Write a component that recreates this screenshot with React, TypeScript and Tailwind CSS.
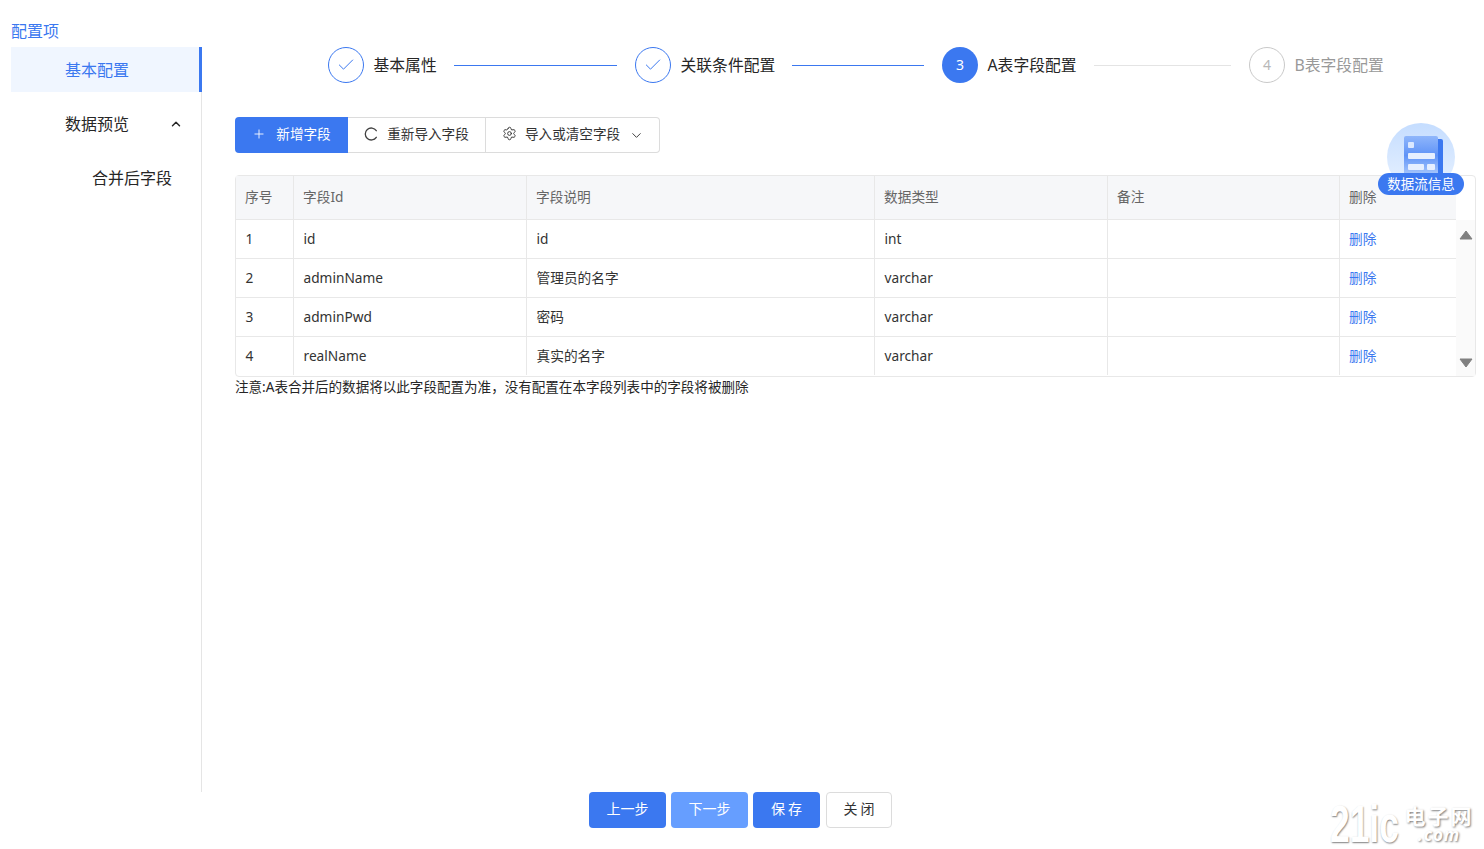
import React from "react";
import { Plus, Settings, ChevronDown, ChevronUp, Check } from "lucide-react";

const font = "[font-family:'Noto_Sans','Noto_Sans_CJK_SC',sans-serif]";

const cols = "grid grid-cols-[58px_233px_348px_233px_232px_116px]";

function Step({ n, label, state, line }: { n: string; label: string; state: "done" | "active" | "todo"; line?: "blue" | "gray" }) {
  return (
    <div className={line ? "flex w-[307px] items-center" : "flex items-center"}>
      {state === "done" && (
        <div className="flex h-9 w-9 items-center justify-center rounded-full border border-[#3b78f0]">
          <Check size={20} strokeWidth={1.2} className="text-[#3b78f0]" />
        </div>
      )}
      {state === "active" && (
        <div className="flex h-9 w-9 items-center justify-center rounded-full bg-[#3b78f0] text-sm text-white">{n}</div>
      )}
      {state === "todo" && (
        <div className="flex h-9 w-9 items-center justify-center rounded-full border border-[#c9c9c9] text-sm text-[#b8b8b8]">{n}</div>
      )}
      <span className={state === "todo" ? "ml-[9.5px] pt-0.5 text-[15.8px] text-[#999999]" : "ml-[9.5px] pt-0.5 text-[15.8px] text-[#262626]"}>{label}</span>
      {line && <div className={line === "blue" ? "ml-[17px] mr-[18px] h-px flex-1 bg-[#3b78f0]" : "ml-[17px] mr-[18px] h-px flex-1 bg-[#e4e4e4]"} />}
    </div>
  );
}

const rows = [
  ["1", "id", "id", "int"],
  ["2", "adminName", "管理员的名字", "varchar"],
  ["3", "adminPwd", "密码", "varchar"],
  ["4", "realName", "真实的名字", "varchar"],
];

export default function App() {
  return (
    <div className={`${font} relative h-[849px] w-[1484px] overflow-hidden bg-white text-[#262626]`}>
      <div className="flex h-[792px]">
        <aside className="w-[202px] shrink-0 pl-[11px] pt-[22px]">
          <div className="h-[25px] text-base leading-[19px] text-[#3b78f0]">配置项</div>
          <div className="-ml-[11px] h-[745px] border-r border-[#e5e5e5] pl-[11px]">
            <div className="flex h-[45px] items-center border-r-[3px] border-[#3b78f0] bg-[#f0f6ff] pl-[54px] -mr-px text-base text-[#3b78f0]">基本配置</div>
            <div className="mt-[9px] flex h-[45px] items-center justify-between pl-[54px] pr-[18px] text-base">
              <span>数据预览</span>
              <ChevronUp size={14} strokeWidth={2.5} />
            </div>
            <div className="mt-[9px] flex h-[45px] items-center pl-[81px] text-base">合并后字段</div>
          </div>
        </aside>

        <main className="flex-1 pl-[33px] pr-2 pt-[47px]">
          <div className="flex pl-[93px]">
            <Step n="1" label="基本属性" state="done" line="blue" />
            <Step n="2" label="关联条件配置" state="done" line="blue" />
            <Step n="3" label="A表字段配置" state="active" line="gray" />
            <Step n="4" label="B表字段配置" state="todo" />
          </div>

          <div className="mt-[34px] flex h-9 text-[13.6px] leading-none">
            <button className="flex w-[113px] items-center justify-center gap-2.5 rounded-l bg-[#3b78f0] pb-[3px] text-white">
              <Plus size={14} strokeWidth={1.5} />
              新增字段
            </button>
            <button className="flex w-[138px] items-center justify-center gap-[9px] border-y border-r border-[#dcdcdc] pb-[3px] text-[#333333]">
              <svg width="14" height="14" viewBox="0 0 14 14" fill="none" stroke="#404040" strokeWidth="1.3" strokeLinecap="round">
                <path d="M12.3 3.7A6 6 0 1 0 12.3 10.3" />
              </svg>
              重新导入字段
            </button>
            <button className="flex w-[174px] items-center justify-start gap-[8px] rounded-r border-y border-r border-[#dcdcdc] pb-[3px] pl-[16px] text-[#333333]">
              <Settings size={15} strokeWidth={1.5} />
              导入或清空字段
              <ChevronDown size={15} strokeWidth={1.5} className="ml-px mt-[3px]" />
            </button>
          </div>

          <div className="mt-[22px] flex h-[202px] w-[1241px] rounded border border-[#e8e8e8]">
            <div className="w-[1220px] shrink-0 overflow-hidden">
              <div className={`${cols} h-[44px] border-b border-[#e8e8e8] bg-[#f6f7f9] text-[13.7px] text-[#666666]`}>
                {["序号", "字段Id", "字段说明", "数据类型", "备注", "删除"].map((h, i) => (
                  <div key={h} className={i < 5 ? "flex items-center border-r border-[#e8e8e8] pl-[9px]" : "flex items-center pl-[9px]"}>{h}</div>
                ))}
              </div>
              {rows.map((r, idx) => (
                <div key={r[0]} className={idx < 3 ? `${cols} h-[39px] border-b border-[#e8e8e8] text-[13.7px] text-[#333333]` : `${cols} h-[38px] text-[13.7px] text-[#333333]`}>
                  {r.map((c) => (
                    <div key={c} className="flex items-center border-r border-[#e8e8e8] pl-[9.5px]">{c}</div>
                  ))}
                  <div className="border-r border-[#e8e8e8] pl-[10px]" />
                  <div className="flex items-center pl-[9px] text-[#3b78f0]">删除</div>
                </div>
              ))}
            </div>
            <div className="mt-[44px] flex flex-1 flex-col items-center justify-between bg-[#fafafa] pb-[8px] pt-[10px]">
              <svg width="14" height="10" viewBox="0 0 14 10"><path d="M7 1 L13 9 H1 Z" fill="#808080" stroke="#808080" strokeLinejoin="round" /></svg>
              <svg width="14" height="10" viewBox="0 0 14 10"><path d="M7 9 L13 1 H1 Z" fill="#808080" stroke="#808080" strokeLinejoin="round" /></svg>
            </div>
          </div>

          <p className="text-[13.55px] leading-5 text-[#262626]">注意:A表合并后的数据将以此字段配置为准，没有配置在本字段列表中的字段将被删除</p>
        </main>
      </div>

      <div className="flex h-9 pl-[589px] text-sm">
        <button className="w-[77px] rounded bg-[#3b78f0] pb-0.5 text-white">上一步</button>
        <button className="ml-[5px] w-[77px] rounded bg-[#669eff] pb-0.5 text-white">下一步</button>
        <button className="ml-[5px] w-[67px] rounded bg-[#3b78f0] pb-0.5 pl-[3px] tracking-[3px] text-white">保存</button>
        <button className="ml-[6px] w-[66px] rounded border border-[#dcdcdc] pb-0.5 pl-[3px] tracking-[3px] text-[#333333]">关闭</button>
      </div>

      {/* floating data-flow badge */}
      <div className="absolute left-[1378px] top-[123px] flex w-[86px] flex-col items-center">
        <div className="flex h-[68px] w-[68px] items-start justify-center rounded-full bg-gradient-to-b from-[#c5ddff] to-[#e8f2ff] pl-[3px] pt-[12px]">
          <svg width="42" height="40" viewBox="0 0 42 40">
            <defs>
              <linearGradient id="doc" x1="0" y1="0" x2="0" y2="1">
                <stop offset="0" stopColor="#8fb6fb" />
                <stop offset="0.5" stopColor="#5f93f7" />
                <stop offset="1" stopColor="#a9c8fc" />
              </linearGradient>
            </defs>
            <rect x="34" y="4" width="7" height="36" rx="2" fill="#3b78f0" />
            <rect x="2" y="1" width="34" height="39" rx="2" fill="url(#doc)" />
            <rect x="6" y="7" width="6" height="6" rx="1" fill="#dbe8ff" />
            <rect x="6" y="18" width="27" height="6" rx="1" fill="#e6efff" />
            <rect x="6" y="29" width="16" height="6" rx="1" fill="#e6efff" />
            <rect x="25" y="29" width="8" height="6" rx="1" fill="#e6efff" />
          </svg>
        </div>
        <div className="absolute top-[50px] flex h-[22px] w-[86px] items-center justify-center rounded-full bg-[#3b78f0] text-[13.5px] text-white">数据流信息</div>
      </div>

      {/* watermark */}
      <div className="absolute left-[1330px] top-[804px] flex h-[40px] select-none items-center text-white">
        <div className="h-[40px] w-[72px]">
          <span className="block origin-left scale-x-[0.68] whitespace-nowrap font-['Liberation_Sans',sans-serif] text-[52px] font-bold leading-[40px] [text-shadow:1px_1px_2px_#808080]">21ic</span>
        </div>
        <div className="ml-px flex w-[72px] flex-col items-center [text-shadow:1px_1px_2px_#808080]">
          <span className="h-[22px] text-[21px] font-bold leading-[22px] tracking-[2px]">电子网</span>
          <span className="h-[16px] text-[17px] font-bold italic leading-[16px] tracking-[1px]">.com</span>
        </div>
      </div>
    </div>
  );
}
